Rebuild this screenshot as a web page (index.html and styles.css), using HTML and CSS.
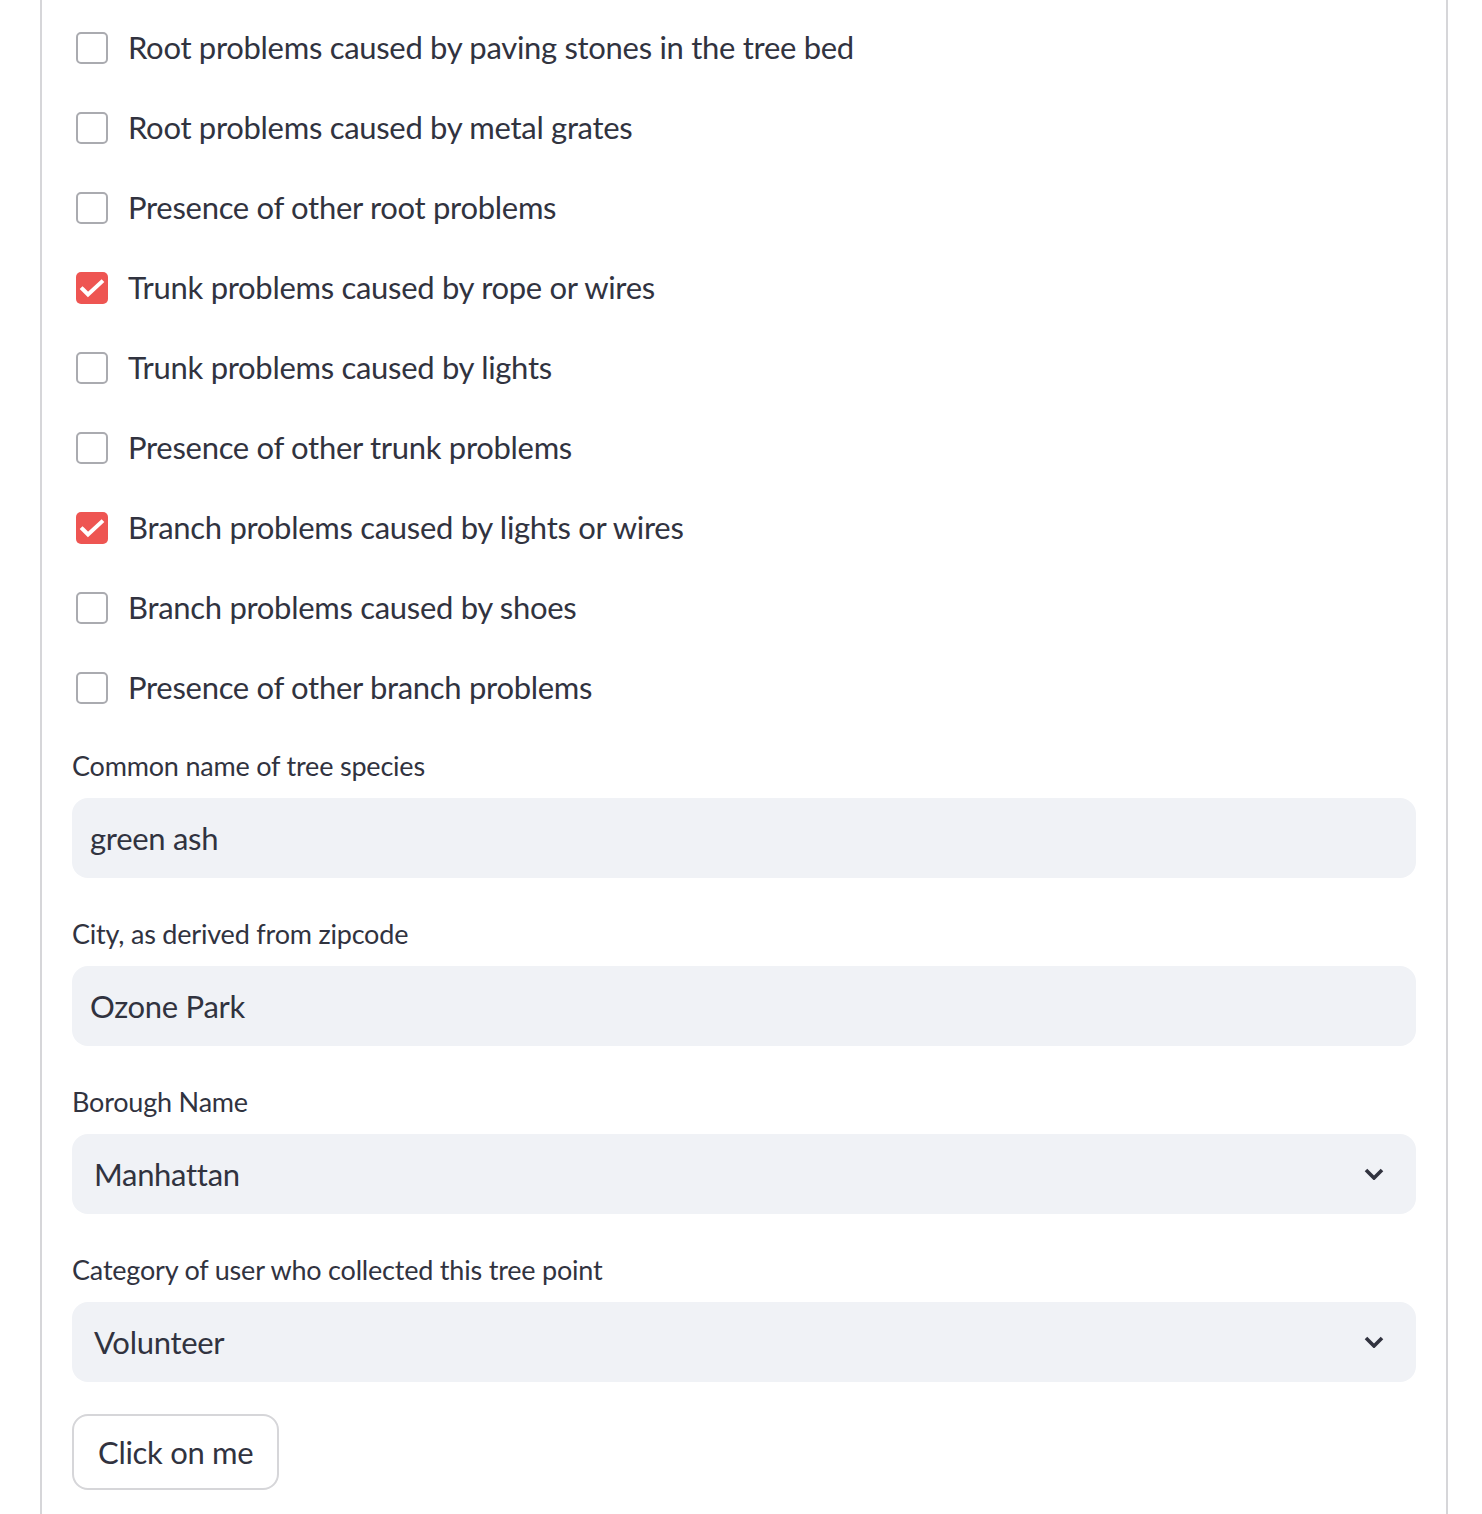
FILE: index.html
```html
<!DOCTYPE html>
<html lang="en">
<head>
<meta charset="utf-8">
<title>Tree form</title>
<link rel="stylesheet" href="styles.css">
</head>
<body>
<div class="form">
  <div class="checks">
    <label class="check"><span class="box"></span><span class="ctext">Root problems caused by paving stones in the tree bed</span></label>
    <label class="check"><span class="box"></span><span class="ctext">Root problems caused by metal grates</span></label>
    <label class="check"><span class="box"></span><span class="ctext">Presence of other root problems</span></label>
    <label class="check"><span class="box checked"><svg viewBox="0 0 32 32" width="32" height="32"><path d="M6.5 17 L12 22.5 L25.5 10" fill="none" stroke="#fff" stroke-width="4" stroke-linecap="square"/></svg></span><span class="ctext">Trunk problems caused by rope or wires</span></label>
    <label class="check"><span class="box"></span><span class="ctext">Trunk problems caused by lights</span></label>
    <label class="check"><span class="box"></span><span class="ctext">Presence of other trunk problems</span></label>
    <label class="check"><span class="box checked"><svg viewBox="0 0 32 32" width="32" height="32"><path d="M6.5 17 L12 22.5 L25.5 10" fill="none" stroke="#fff" stroke-width="4" stroke-linecap="square"/></svg></span><span class="ctext">Branch problems caused by lights or wires</span></label>
    <label class="check"><span class="box"></span><span class="ctext">Branch problems caused by shoes</span></label>
    <label class="check"><span class="box"></span><span class="ctext">Presence of other branch problems</span></label>
  </div>

  <div class="field">
    <div class="flabel">Common name of tree species</div>
    <div class="input">green ash</div>
  </div>

  <div class="field">
    <div class="flabel">City, as derived from zipcode</div>
    <div class="input">Ozone Park</div>
  </div>

  <div class="field">
    <div class="flabel">Borough Name</div>
    <div class="select"><span>Manhattan</span><svg class="chev" viewBox="0 0 20 12" width="20" height="12"><path d="M2 2 L10 10 L18 2" fill="none" stroke="#31333f" stroke-width="3.6"/></svg></div>
  </div>

  <div class="field">
    <div class="flabel">Category of user who collected this tree point</div>
    <div class="select"><span>Volunteer</span><svg class="chev" viewBox="0 0 20 12" width="20" height="12"><path d="M2 2 L10 10 L18 2" fill="none" stroke="#31333f" stroke-width="3.6"/></svg></div>
  </div>

  <div class="btnrow"><button class="btn">Click on me</button></div>
</div>
</body>
</html>
```

FILE: styles.css
```css
* { box-sizing: border-box; }
body {
  margin: 0;
  background: #ffffff;
  color: #31333f;
  font-family: "Lato", "Noto Sans", sans-serif;
}
.form {
  margin-left: 40px;
  width: 1408px;
  border: 2px solid #d6d6d9;
  border-top: none;
  padding: 25px 30px 32px 30px;
  display: flex;
  flex-direction: column;
  gap: 32px;
}
.checks {
  display: flex;
  flex-direction: column;
  gap: 35px;
}
.check {
  display: flex;
  align-items: center;
  height: 45px;
  padding-left: 4px;
  gap: 20px;
}
.box {
  width: 32px;
  height: 32px;
  border: 2px solid #aaabb0;
  border-radius: 5px;
  flex: none;
  display: flex;
  align-items: center;
  justify-content: center;
  background: #fff;
}
.box.checked {
  border: none;
  background: #ee5552;
}
.ctext {
  font-size: 31px;
  letter-spacing: -0.3px;
  line-height: 45px;
  margin-top: -1px;
}
.field {
  display: flex;
  flex-direction: column;
}
.flabel {
  font-size: 27px;
  letter-spacing: -0.2px;
  line-height: 48px;
  margin-bottom: 8px;
}
.input, .select {
  height: 80px;
  background: #f0f2f6;
  border-radius: 16px;
  font-size: 31px;
  letter-spacing: -0.3px;
  display: flex;
  align-items: center;
}
.input { padding-left: 18px; }
.select {
  padding-left: 22px;
  padding-right: 32px;
  justify-content: space-between;
}
.chev { flex: none; }
.btnrow { display: flex; }
.btn {
  height: 76px;
  padding: 0 24px;
  border: 2px solid #d6d6d9;
  border-radius: 16px;
  background: #fff;
  color: #31333f;
  font-family: "Lato", "Noto Sans", sans-serif;
  font-size: 31px;
  letter-spacing: -0.3px;
}
```
